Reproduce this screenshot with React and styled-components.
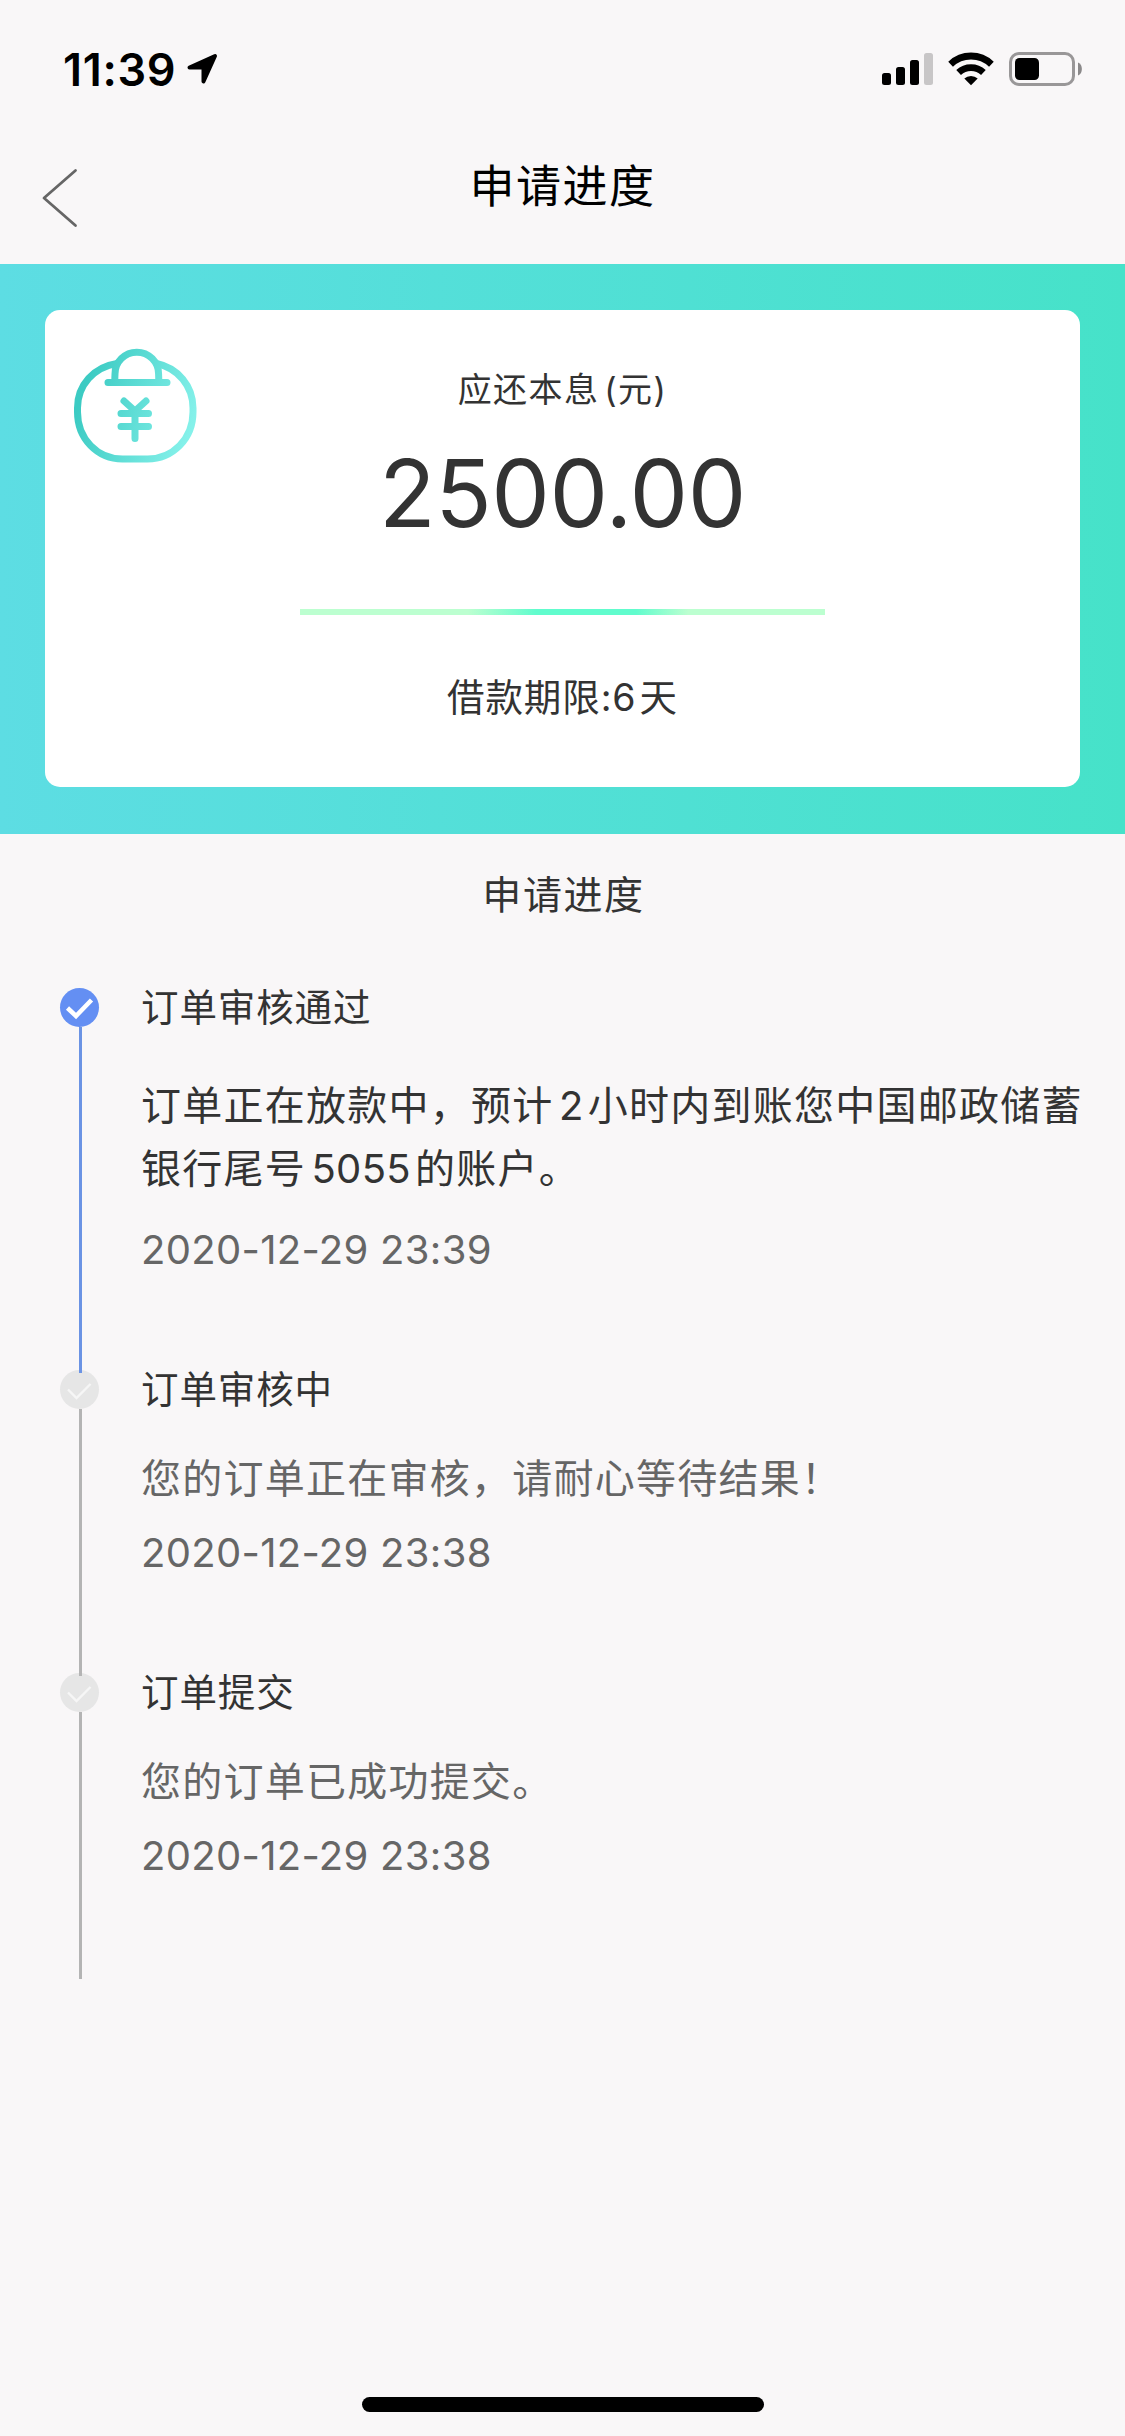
import styled, { createGlobalStyle } from 'styled-components'

const steps = [
  {
    title: '订单审核通过',
    desc: <>订单正在放款中，预计<Num>2</Num>小时内到账您中国邮政储蓄银行尾号<Num>5055</Num>的账户。</>,
    time: '2020-12-29 23:39',
    active: true,
  },
  {
    title: '订单审核中',
    desc: '您的订单正在审核，请耐心等待结果！',
    time: '2020-12-29 23:38',
  },
  {
    title: '订单提交',
    desc: '您的订单已成功提交。',
    time: '2020-12-29 23:38',
  },
]

function Num({ children }) {
  return <Digits>{children}</Digits>
}

function PurseIcon() {
  return (
    <svg width="124" height="116" viewBox="0 0 124 116" fill="none">
      <defs>
        <linearGradient id="purse" gradientUnits="userSpaceOnUse" x1="10" y1="45" x2="118" y2="80">
          <stop offset="0" stopColor="#3ccbc3" />
          <stop offset="1" stopColor="#85f1ea" />
        </linearGradient>
      </defs>
      <g stroke="url(#purse)" strokeWidth="7" strokeLinecap="round" strokeLinejoin="round">
        <path strokeLinecap="butt" d="M44 15.500C21 19 4.500 37 4.500 60v4c0 27 20 47 45 47h25c25 0 45.500-20 45.500-47v-4c0-22-15-40-36.500-44.500" />
        <path d="M42 34C41.500 31 42 29 42 26a21.800 21.800 0 0 1 43.600 0c0 3 .4 5 0 8" />
        <path d="M35 34.600L94 34.610" />
        <path d="M51 53l11 10 11-10M62 63v27.500M48 65.500h27.500M48 78.500h27.500" />
      </g>
    </svg>
  )
}

function App() {
  return (
    <Screen>
      <GlobalStyle />
      <StatusBar>
        <Clock>
          11:39
          <svg width="32" height="32" viewBox="0 0 32 32">
            <path d="M29 3L17.500 28.500V14.500H3.500Z" fill="#000" stroke="#000" strokeWidth="4" strokeLinejoin="round" />
          </svg>
        </Clock>
        <Indicators>
          <svg width="51" height="34" viewBox="0 0 51 34">
            <rect x="0" y="21" width="9" height="12" rx="2.500" />
            <rect x="14" y="15" width="9" height="18" rx="2.500" />
            <rect x="28" y="8" width="9" height="25" rx="2.500" />
            <rect x="42" y="1" width="9" height="32" rx="2.500" fill="#c8c6c7" />
          </svg>
          <svg width="46" height="34" viewBox="0 0 46 34">
            <g fill="none" stroke="#000" strokeWidth="6.800">
              <path d="M2.600 12.200a29.500 29.500 0 0 1 40.800 0" />
              <path d="M10.600 20.500a18 18 0 0 1 24.800 0" />
            </g>
            <path d="M16.300 26.600a10 10 0 0 1 13.400 0L23 33.300z" />
          </svg>
          <svg width="74" height="34" viewBox="0 0 74 34">
            <rect x="1.500" y="1.500" width="63" height="31" rx="8.500" fill="none" stroke="#999798" strokeWidth="3" />
            <rect x="6" y="6" width="24" height="22" rx="4.500" />
            <path d="M69 10.500c5.200 1.500 5.200 11.500 0 13z" fill="#8b898a" />
          </svg>
        </Indicators>
      </StatusBar>
      <NavBar>
        <BackButton aria-label="返回">
          <svg width="38" height="60" viewBox="0 0 38 60">
            <path d="M34.500 2.500L3 30l31.500 27.500" fill="none" stroke="#666" strokeWidth="2.800" strokeLinecap="round" strokeLinejoin="round" />
          </svg>
        </BackButton>
        <NavTitle>申请进度</NavTitle>
      </NavBar>

      <Banner>
        <Card>
          <PurseSlot><PurseIcon /></PurseSlot>
          <AmountLabel>应还本息<Paren>(</Paren>元)</AmountLabel>
          <Amount>2500.00</Amount>
          <Divider />
          <Term>借款期限:6<Unit>天</Unit></Term>
        </Card>
      </Banner>

      <SectionTitle>申请进度</SectionTitle>
      <Timeline>
        {steps.map((step) => (
          <Step key={step.title}>
            <Rail>
              <Dot $active={step.active}>
                <svg width="39" height="39" viewBox="0 0 39 39" fill="none">
                  <path
                    d={step.active ? 'M7.500 20L16 28l15.500-16' : 'M8 19.500L16.500 28 30.500 14'}
                    stroke={step.active ? '#fff' : '#f6f6f6'}
                    strokeWidth={step.active ? 4.5 : 2.4}
                  />
                </svg>
              </Dot>
              <Line $active={step.active} />
            </Rail>
            <Body>
              <StepTitle>{step.title}</StepTitle>
              <Desc $active={step.active}>{step.desc}</Desc>
              <Time>{step.time}</Time>
            </Body>
          </Step>
        ))}
      </Timeline>
      <HomeIndicator />
    </Screen>
  )
}

const GlobalStyle = createGlobalStyle`
  * {
    box-sizing: border-box;
  }
  body {
    margin: 0;
    background: #f9f7f8;
    font-family: Inter, "Noto Sans CJK SC", sans-serif;
    color: #333;
  }
  svg {
    display: block;
  }
`

const Screen = styled.div`
  display: flex;
  flex-direction: column;
  width: 1125px;
  height: 2436px;
  padding-bottom: 24px;
  background: #f9f7f8;
`

const StatusBar = styled.div`
  display: flex;
  justify-content: space-between;
  height: 132px;
  padding: 52px 42px 0 63px;
`

const Clock = styled.div`
  display: flex;
  align-items: center;
  gap: 10px;
  height: 34px;
  color: #000;
  font-size: 45px;
  font-weight: 600;
  letter-spacing: 0.7px;
`

const Indicators = styled.div`
  display: flex;
  gap: 15px;
  height: 34px;
`

const NavBar = styled.div`
  display: grid;
  grid-template-columns: 200px 1fr 200px;
  height: 132px;
`

const BackButton = styled.button`
  display: flex;
  align-items: flex-start;
  padding: 36px 0 0 41px;
  border: 0;
  background: none;
`

const NavTitle = styled.h1`
  margin: 0;
  color: #000;
  font-size: 45px;
  font-weight: 400;
  line-height: 110px;
  letter-spacing: 1.5px;
  text-align: center;
`

const Banner = styled.div`
  height: 570px;
  padding: 46px 45px;
  background: linear-gradient(90deg, #5ddde3, #46e2c9);
`

const Card = styled.div`
  display: flex;
  flex-direction: column;
  align-items: center;
  position: relative;
  height: 477px;
  padding-top: 55px;
  border-radius: 15px;
  background: #fff;
`

const PurseSlot = styled.div`
  position: absolute;
  top: 38px;
  left: 28px;
`

const AmountLabel = styled.div`
  font-size: 34px;
  line-height: 50px;
  letter-spacing: 1.4px;
`

const Paren = styled.span`
  margin-left: 5px;
`

const Amount = styled.div`
  margin-top: 23px;
  font-size: 93px;
  line-height: 110px;
  letter-spacing: -0.4px;
`

const Divider = styled.div`
  width: 525px;
  height: 6px;
  margin-top: 61px;
  background: linear-gradient(90deg, #bcffd0 32%, #61fccd 45%, #61fccd 64%, #bcffd0 74%);
`

const Term = styled.div`
  margin-top: 55px;
  font-size: 37.5px;
  line-height: 56px;
  letter-spacing: 0.9px;
`

const Unit = styled.span`
  margin-left: 3px;
`

const SectionTitle = styled.h2`
  margin: 0;
  padding: 30px 0 0 2px;
  font-size: 39px;
  font-weight: 400;
  line-height: 62px;
  letter-spacing: 1.6px;
  text-align: center;
`

const Timeline = styled.div`
  padding: 62px 30px 0 60px;
`

const Step = styled.div`
  display: flex;
  gap: 42px;
`

const Rail = styled.div`
  display: flex;
  flex-direction: column;
  align-items: center;
  width: 39px;
`

const Dot = styled.div`
  width: 39px;
  height: 39px;
  border-radius: 50%;
  background: ${({ $active }) => ($active ? '#648ff3' : '#e6e6e6')};
`

/* runs slightly over the next dot */
const Line = styled.div`
  position: relative;
  z-index: 1;
  left: 1px;
  flex: 1;
  width: 3px;
  margin-bottom: -3px;
  background: ${({ $active }) => ($active ? '#6b93e4' : '#b4b4b4')};
`

const Body = styled.div`
  flex: 1;
  padding-bottom: 90px;
`

const StepTitle = styled.div`
  font-size: 37.5px;
  line-height: 40px;
  letter-spacing: 0.9px;
`

const Desc = styled.div`
  margin-top: ${({ $active }) => ($active ? '46px' : '37px')};
  margin-bottom: ${({ $active }) => ($active ? '20px' : '13px')};
  color: ${({ $active }) => ($active ? '#333' : '#666')};
  font-size: 40px;
  line-height: 63px;
  letter-spacing: 1.25px;
`

const Digits = styled.span`
  margin: 0 4px 0 5.5px;
  letter-spacing: 0.3px;
`

const Time = styled.div`
  color: #666;
  font-size: 40px;
  line-height: 60px;
  letter-spacing: 0.3px;
`

const HomeIndicator = styled.div`
  align-self: center;
  width: 402px;
  height: 15px;
  margin-top: auto;
  border-radius: 8px;
  background: #000;
`

export default App
